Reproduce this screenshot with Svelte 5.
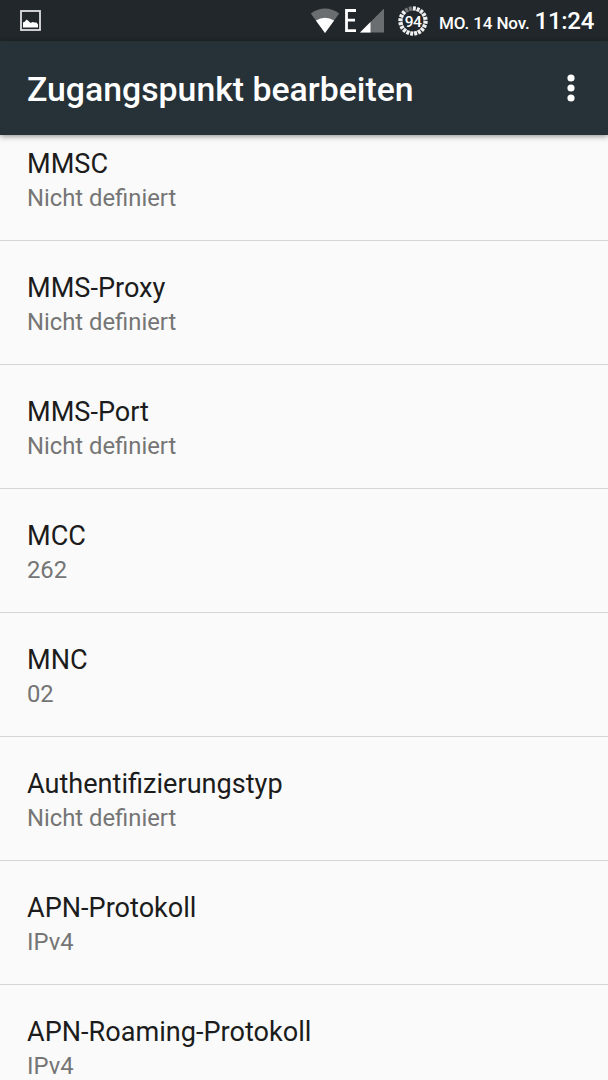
<script>
  const rows = [
    ['MMSC', 'Nicht definiert'],
    ['MMS-Proxy', 'Nicht definiert'],
    ['MMS-Port', 'Nicht definiert'],
    ['MCC', '262'],
    ['MNC', '02'],
    ['Authentifizierungstyp', 'Nicht definiert'],
    ['APN-Protokoll', 'IPv4'],
    ['APN-Roaming-Protokoll', 'IPv4']
  ];
  // Battery ring: 20 ticks, the ones just before twelve o'clock are spent.
  const ticks = Array.from({ length: 20 }, (_, i) => i);
</script>

<div class="screen">
  <header class="status">
    <svg class="pic" width="22" height="22" viewBox="0 0 22 22">
      <rect x="1" y="1" width="19" height="19" fill="none" stroke="#e0dfe3" stroke-width="1.8" />
      <path d="M3 17.500V12.500l2-1 1.500-2L8.500 11l2 2 2-1 2 .5 2 0 1.500 2v3z" fill="#fff" />
    </svg>
    <div class="right">
      <svg class="wifi" width="30" height="26" viewBox="0 0 30 26">
        <path d="M.8 5.500Q15-4.500 29.200 5.500L15 25z" fill="#6b6e70" />
        <path d="M5.900 12.500Q15 7 24.100 12.500L15 25z" fill="#fff" />
      </svg>
      <svg class="cell" width="40" height="26" viewBox="0 0 40 26">
        <path d="M12 2.500H2.500v20.200H12M2.500 12.200H11" fill="none" stroke="#fff" stroke-width="2.800" />
        <path d="M40.500 0v24.500H16z" fill="#6b6e70" />
        <path d="M26.500 14v10.500H16z" fill="#fff" />
      </svg>
      <svg class="battery" width="30" height="30" viewBox="0 0 30 30">
        {#each ticks as i}
          <rect class:spent={i >= 18} x="13.500" y=".3" width="3" height="4.300" transform="rotate({i * 18 + 6} 15 15)" />
        {/each}
        <text x="15" y="20.600" text-anchor="middle">94</text>
      </svg>
      <span class="date">MO. 14 Nov.</span>
      <span class="time">11:24</span>
    </div>
  </header>
  <div class="bar">
    <h1>Zugangspunkt bearbeiten</h1>
    <svg width="8" height="28" viewBox="0 0 8 28"><circle cx="4" cy="4" r="3.600" /><circle cx="4" cy="14" r="3.600" /><circle cx="4" cy="24" r="3.600" /></svg>
  </div>
  <main>
    {#each rows as [title, value]}
      <section>
        <h2>{title}</h2>
        <p>{value}</p>
      </section>
    {/each}
  </main>
</div>

<style>
  :global(body) { margin: 0; overflow: hidden; }
  .screen { width: 608px; height: 1080px; overflow: hidden; background: #fafafa; font-family: Roboto, sans-serif; display: flex; flex-direction: column; }
  .status { height: 41px; flex: none; box-sizing: border-box; background: #21272b; display: flex; justify-content: space-between; align-items: center; padding: 0 14px 0 20px; color: #fff; }
  .right { display: flex; align-items: center; white-space: nowrap; }
  .cell { margin-left: 4px; }
  .battery { margin-left: 14px; }
  .battery rect { fill: #f0f0f0; }
  .battery rect.spent { fill: #75797b; }
  .battery text { font-size: 15.5px; font-weight: 500; letter-spacing: -0.5px; fill: #fff; }
  .date { font-size: 17px; font-weight: 500; margin-left: 11px; padding-top: 4px; letter-spacing: -0.12px; }
  .time { font-size: 24px; font-weight: 500; margin-left: 5px; letter-spacing: -0.3px; padding-top: 1px; }
  .bar { height: 94px; flex: none; background: #263238; color: #fff; display: flex; justify-content: space-between; align-items: center; padding: 0 33px 0 27px; box-shadow: 0 1px 6px #0007; z-index: 1; }
  .bar svg { fill: #fff; }
  h1 { margin: 0; padding-top: 2px; font-size: 33.8px; font-weight: 500; }
  main { margin-top: -18px; }
  section { height: 124px; box-sizing: border-box; padding: 29px 27px 0; border-bottom: 1px solid #d5d5d5; }
  h2 { margin: 0; font-size: 27.1px; line-height: 36px; font-weight: 400; color: #1c1c1c; }
  p { margin: 0; font-size: 23.8px; line-height: 32px; color: #757575; }
</style>
